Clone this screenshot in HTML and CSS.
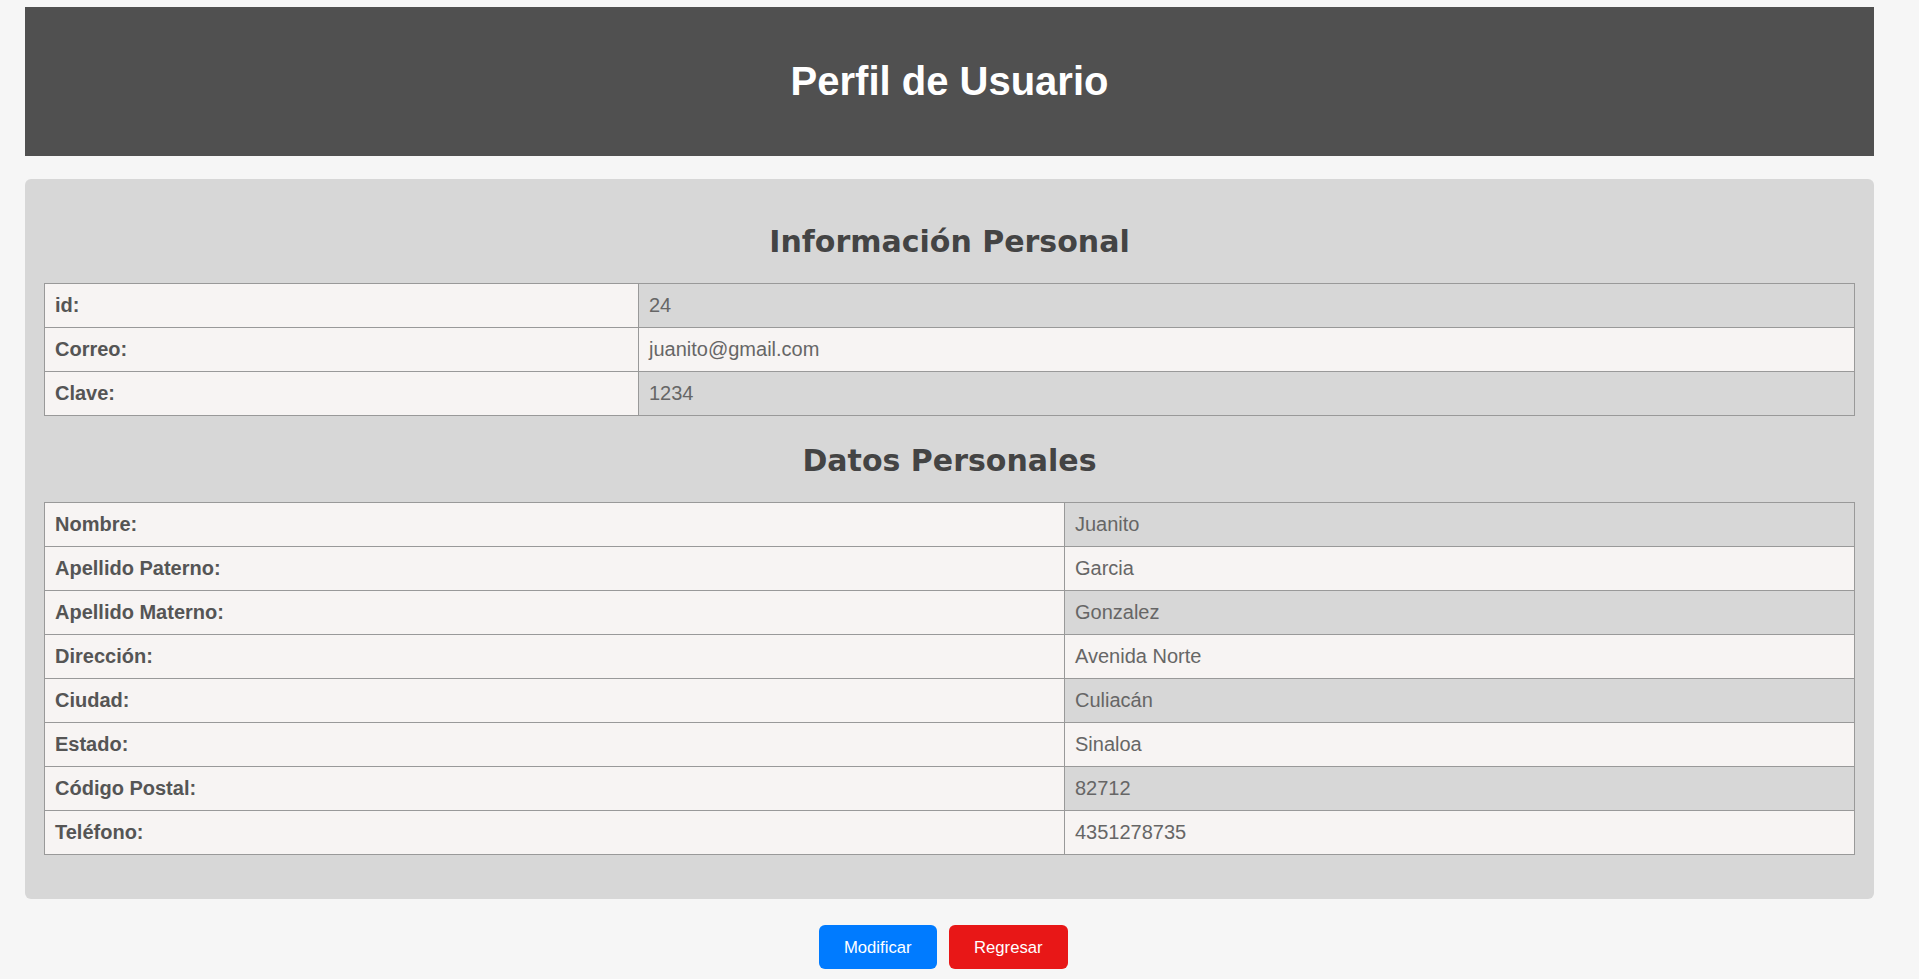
FILE: index.html
```html
<!DOCTYPE html>
<html lang="es">
<head>
<meta charset="utf-8">
<title>Perfil de Usuario</title>
<link rel="stylesheet" href="styles.css">
</head>
<body>
<div class="page">
  <header class="topbar">
    <h1 class="title">Perfil de Usuario</h1>
  </header>

  <section class="card">
    <h2 class="section-title">Información Personal</h2>
    <table class="data-table info-table">
      <tr><th>id:</th><td>24</td></tr>
      <tr><th>Correo:</th><td>juanito@gmail.com</td></tr>
      <tr><th>Clave:</th><td>1234</td></tr>
    </table>

    <h2 class="section-title">Datos Personales</h2>
    <table class="data-table personal-table">
      <tr><th>Nombre:</th><td>Juanito</td></tr>
      <tr><th>Apellido Paterno:</th><td>Garcia</td></tr>
      <tr><th>Apellido Materno:</th><td>Gonzalez</td></tr>
      <tr><th>Dirección:</th><td>Avenida Norte</td></tr>
      <tr><th>Ciudad:</th><td>Culiacán</td></tr>
      <tr><th>Estado:</th><td>Sinaloa</td></tr>
      <tr><th>Código Postal:</th><td>82712</td></tr>
      <tr><th>Teléfono:</th><td>4351278735</td></tr>
    </table>
  </section>

  <div class="actions">
    <button class="btn btn-blue" type="button">Modificar</button><button class="btn btn-red" type="button">Regresar</button>
  </div>
</div>
</body>
</html>
```

FILE: styles.css
```css
* {
  box-sizing: border-box;
}

html {
  background: #f6f6f6;
}

body {
  margin: 0;
  background: #f6f6f6;
  font-family: "Liberation Sans", Arial, sans-serif;
}

.page {
  width: 1849px;
  margin: 7px 0 0 25px;
}

.topbar {
  background: #505050;
  padding: 51px 0 52px;
  margin-bottom: 23px;
  text-align: center;
}

.title {
  margin: 0;
  font-family: "Liberation Sans", Arial, sans-serif;
  font-size: 40px;
  line-height: 46px;
  font-weight: bold;
  color: #ffffff;
}

.card {
  background: #d7d7d7;
  border-radius: 6px;
  padding: 19px 19px 19px;
}

.section-title {
  margin: 26px 0 24px;
  font-family: "DejaVu Sans", Verdana, sans-serif;
  font-size: 30px;
  line-height: 35px;
  font-weight: bold;
  color: #444444;
  text-align: center;
}

.data-table {
  width: 100%;
  border-collapse: collapse;
  margin-bottom: 25px;
  font-size: 20px;
  line-height: 23px;
}

.info-table {
  margin-bottom: 27px;
}

.data-table th,
.data-table td {
  border: 1px solid #999999;
  padding: 10px 10px;
  text-align: left;
  vertical-align: middle;
}

.data-table th {
  background: #f7f4f3;
  color: #555555;
  font-weight: bold;
}

.data-table td {
  color: #666666;
  font-weight: normal;
}

.data-table tr:nth-child(odd) td {
  background: #d7d7d7;
}

.data-table tr:nth-child(even) td {
  background: #f7f4f3;
}

.info-table th {
  width: 594px;
}

.personal-table th {
  width: 1020px;
}

.actions {
  margin-top: 26px;
  text-align: center;
  font-size: 0;
}

.btn {
  font-family: "Liberation Sans", Arial, sans-serif;
  font-size: 16.67px;
  line-height: 19px;
  color: #ffffff;
  border: none;
  border-radius: 6px;
  padding: 12.5px 25px;
  margin-right: 12.5px;
  cursor: pointer;
}

.btn-blue {
  background: #007bff;
}

.btn-red {
  background: #e81717;
}
```
